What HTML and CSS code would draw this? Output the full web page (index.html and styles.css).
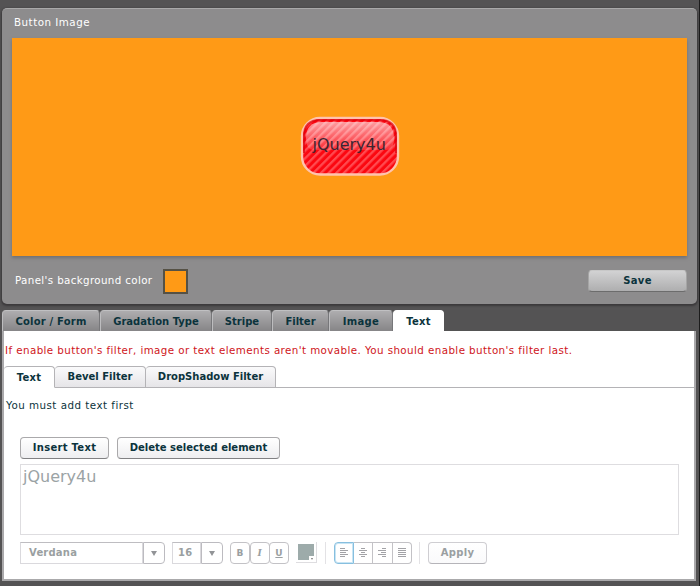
FILE: index.html
```html
<!DOCTYPE html>
<html lang="en">
<head>
<meta charset="utf-8">
<title>Button Maker</title>
<link rel="stylesheet" href="styles.css">
</head>
<body>
<section class="panel">
  <h1 class="panel-title"><span>Button Image</span></h1>
  <div class="canvas">
    <div class="made-button">
      <svg class="made-art" width="100" height="60" viewBox="0 0 100 60">
        <defs>
          <pattern id="stripe" width="5.4" height="5.4" patternUnits="userSpaceOnUse" patternTransform="rotate(45)">
            <rect width="5.4" height="5.4" fill="#fb0710"/>
            <rect width="2.3" height="5.4" fill="#ff4a50"/>
          </pattern>
          <linearGradient id="gloss" x1="0" y1="0" x2="0" y2="1">
            <stop offset="0" stop-color="#fff" stop-opacity=".6"/>
            <stop offset="1" stop-color="#fff" stop-opacity=".15"/>
          </linearGradient>
        </defs>
        <rect x="2" y="2" width="96" height="56.500" rx="18" fill="url(#stripe)" stroke="#ffc3ad" stroke-width="2.4"/>
        <path d="M4 37V20Q4 4 20 4H80Q96 4 96 20V37" fill="none" stroke="#dc000b" stroke-width="2" opacity=".7"/>
        <path d="M6 22Q6 6 22 6H78Q94 6 94 22Q94 34 86 34H14Q6 34 6 22Z" fill="url(#gloss)"/>
      </svg>
      <span class="made-text">jQuery4u</span>
    </div>
  </div>
  <div class="panel-foot">
    <span class="bg-label">Panel's background color</span>
    <span class="swatch"></span>
    <button class="btn save"><span>Save</span></button>
  </div>
</section>
<nav class="tabs">
  <a class="tab t1"><span>Color / Form</span></a><a class="tab t2"><span>Gradation Type</span></a><a class="tab t3"><span>Stripe</span></a><a class="tab t4"><span>Filter</span></a><a class="tab t5"><span>Image</span></a><a class="tab t6 active"><span>Text</span></a>
</nav>
<main class="content">
  <p class="warning"><span>If enable button's filter, image or text elements aren't movable. You should enable button's filter last.</span></p>
  <nav class="subtabs">
    <a class="subtab s1 active"><span>Text</span></a><a class="subtab s2"><span>Bevel Filter</span></a><a class="subtab s3"><span>DropShadow Filter</span></a><i class="subline"></i>
  </nav>
  <p class="hint"><span>You must add text first</span></p>
  <div class="actions">
    <button class="btn insert"><span>Insert Text</span></button>
    <button class="btn delete"><span>Delete selected element</span></button>
  </div>
  <div class="editor"><span>jQuery4u</span></div>
  <div class="toolbar">
    <div class="combo font"><span class="value">Verdana</span><span class="arrow"></span></div>
    <div class="combo size"><span class="value">16</span><span class="arrow"></span></div>
    <div class="styles"><span class="tool">B</span><span class="tool italic">I</span><span class="tool under">U</span></div>
    <span class="text-color"><i></i></span>
    <span class="divider"></span>
    <div class="align">
      <span class="al on"><svg width="10" height="12"><path d="M1 1.500h5M1 3.500h8M1 5.500h6M1 7.500h8M1 9.500h5"/></svg></span>
      <span class="al"><svg width="10" height="12"><path d="M3 1.500h4M1 3.500h8M3 5.500h4M1 7.500h8M3 9.500h4"/></svg></span>
      <span class="al"><svg width="10" height="12"><path d="M5 1.500h4M1 3.500h8M4 5.500h5M1 7.500h8M5 9.500h4"/></svg></span>
      <span class="al"><svg width="10" height="12"><path d="M1 1.500h8M1 3.500h8M1 5.500h8M1 7.500h8M1 9.500h8"/></svg></span>
    </div>
    <span class="divider second"></span>
    <button class="btn apply"><span>Apply</span></button>
  </div>
</main>
</body>
</html>
```

FILE: styles.css
```css
* { box-sizing: border-box; }
body {
  margin: 0;
  height: 586px;
  padding: 8px 2px 0;
  overflow: hidden;
  background: #545354;
  border-right: 1px solid #1c1c1c;
  font: 10px/14px "DejaVu Sans", Verdana, sans-serif;
  color: #0b333c;
}
h1, p { margin: 0; font-size: 10.3px; font-weight: normal; }
span { white-space: nowrap; }

.panel {
  width: 695px;
  height: 296px;
  padding: 0 10px;
  border: solid #a9a9a9;
  border-width: 1px 0 0;
  border-radius: 5px;
  background: #8d8c8d;
  box-shadow: 0 1px 2px 1px #3b393b;
  color: #fff;
}
.panel-title { height: 29px; padding: 6px 2px 0; letter-spacing: .5px; }
.canvas {
  display: flex;
  justify-content: center;
  width: 675px;
  height: 218px;
  padding: 78px 0 0;
  background: #ff9a16;
  box-shadow: 0 2px 3px #727172;
}
.made-button { position: relative; width: 100px; height: 60px; }
.made-art { display: block; }
.made-text {
  position: absolute;
  left: 13px;
  top: 18px;
  font-size: 16px;
  line-height: 22px;
  color: #3c2631;
}
.panel-foot { display: flex; height: 50px; align-items: center; padding-left: 3px; }
.bg-label { width: 148px; margin-top: -2px; font-size: 10.3px; letter-spacing: .36px; }
.swatch { width: 25px; height: 25px; border: 2px solid #555145; background: #ff9a16; }

.btn {
  height: 22px;
  padding: 0;
  border: 1px solid #aaa9ab;
  border-bottom-color: #818183;
  border-radius: 4px;
  background: linear-gradient(#fff, #eeeef0);
  font: bold 10px/18px "DejaVu Sans", Verdana, sans-serif;
  color: #0b333c;
  letter-spacing: .3px;
}
.save {
  width: 99px;
  margin-left: 400px;
  border-color: #c8c8c8 #a5a5a5 #6c6c6c;
  background: linear-gradient(#d2d2d3, #aeaeaf);
}

.tabs { display: flex; height: 27px; padding-top: 6px; font-weight: bold; }
.tab {
  height: 21px;
  border-top: 1px solid #c0c0c2;
  border-right: 1px solid #77777a;
  border-left: 1px solid #bdbdbf;
  border-radius: 4px 4px 0 0;
  background: linear-gradient(#aeadaf, #868587);
  text-align: center;
  line-height: 21px;
}
.tab.active { border-color: #fff; background: #fff; line-height: 22px; }
.t1 { width: 98px; letter-spacing: .2px; }
.t2 { width: 112px; }
.t3 { width: 60px; }
.t4 { width: 57px; }
.t5 { width: 64px; letter-spacing: .3px; }
.t6 { width: 51px; letter-spacing: .3px; }

.content {
  width: 694px;
  height: 250px;
  border: solid #aaa9ab;
  border-width: 0 2px 2px;
  background: #fff;
}
.warning { height: 35px; padding: 12px 1px 0; color: #cf1521; letter-spacing: .42px; }
.subtabs { display: flex; height: 22px; font-weight: bold; }
.subtab {
  height: 22px;
  border: 1px solid #b4b3b6;
  border-left: 0;
  border-radius: 4px 4px 0 0;
  background: linear-gradient(#fafafb, #e6e5e8);
  text-align: center;
  line-height: 20px;
}
.subtab.active { border-bottom-color: #fff; background: #fff; line-height: 22px; }
.s1 { width: 51px; letter-spacing: .3px; }
.s2 { width: 91px; }
.s3 { width: 130px; }
.subline { flex: 1; border-bottom: 1px solid #b4b3b6; }
.hint { height: 49px; padding: 10px 2px 0; letter-spacing: .49px; }
.actions { display: flex; gap: 8px; height: 28px; padding-left: 16px; }
.insert { width: 89px; }
.delete { width: 163px; letter-spacing: 0; }
.editor {
  width: 659px;
  height: 71px;
  margin: -1px 0 0 16px;
  padding: 2px;
  border: 1px solid #dedde0;
  font-size: 16px;
  line-height: 20px;
  color: #9ba3a5;
}
.toolbar {
  display: flex;
  height: 29px;
  padding: 7px 0 0 16px;
  color: #9a9fa1;
  font-weight: bold;
}
.combo { display: flex; height: 22px; }
.font { width: 145px; }
.size { width: 51px; margin-left: 7px; }
.value {
  flex: 1;
  padding-left: 8px;
  border: 1px solid #dad9dd;
  border-top-color: #bebdc1;
  line-height: 20px;
  letter-spacing: .2px;
}
.size .value { padding-left: 5px; }
.arrow {
  display: flex;
  align-items: center;
  justify-content: center;
  width: 22px;
  border: 1px solid #bcbbc0;
  border-radius: 0 4px 4px 0;
}
.arrow::after {
  content: "";
  border: solid transparent;
  border-width: 5px 3.5px 0;
  border-top-color: #929497;
}
.styles { display: flex; margin-left: 7px; }
.tool {
  width: 20px;
  height: 22px;
  border: 1px solid #c3c2c6;
  border-radius: 4px;
  text-align: center;
  line-height: 20px;
  font-size: 9px;
}
.tool + .tool { margin-left: -.5px; }
.italic { font-family: "DejaVu Serif", serif; font-style: italic; }
.under { text-decoration: underline; }
.text-color {
  position: relative;
  width: 21px;
  height: 21px;
  margin-left: 7px;
  border: solid #dedde0;
  border-width: 0 1px 1px 0;
}
.text-color::before {
  content: "";
  position: absolute;
  inset: 2px 2px 2px 2px;
  background: #9dabaa;
}
.text-color i {
  position: absolute;
  right: 1px;
  bottom: 1px;
  width: 6px;
  height: 5px;
  background: #fff;
}
.text-color i::after {
  content: "";
  position: absolute;
  left: 2px;
  top: 2px;
  border: solid transparent;
  border-width: 2px 1.5px 0;
  border-top-color: #777;
}
.divider { width: 1px; height: 22px; margin-left: 8px; background: #e3e2e5; }
.align { display: flex; height: 22px; margin-left: 8px; }
.al {
  display: flex;
  align-items: center;
  justify-content: center;
  width: 19.5px;
  border: 1px solid #c3c2c6;
  border-left-width: 0;
}
.al:last-child { border-radius: 0 4px 4px 0; }
.al.on {
  border: 1px solid #87bfdf;
  border-radius: 4px 0 0 4px;
  box-shadow: inset 0 0 0 1px #c8e5f4;
}
.al svg { fill: none; stroke: #a2a2a6; stroke-width: 1; }
.divider.second { margin-left: 7px; }
.apply {
  width: 59px;
  margin-left: 8px;
  border-color: #cfced2 #cfced2 #b5b4b9;
  background: linear-gradient(#fff, #fafafb);
  color: #9a9fa1;
  letter-spacing: .3px;
}
```
